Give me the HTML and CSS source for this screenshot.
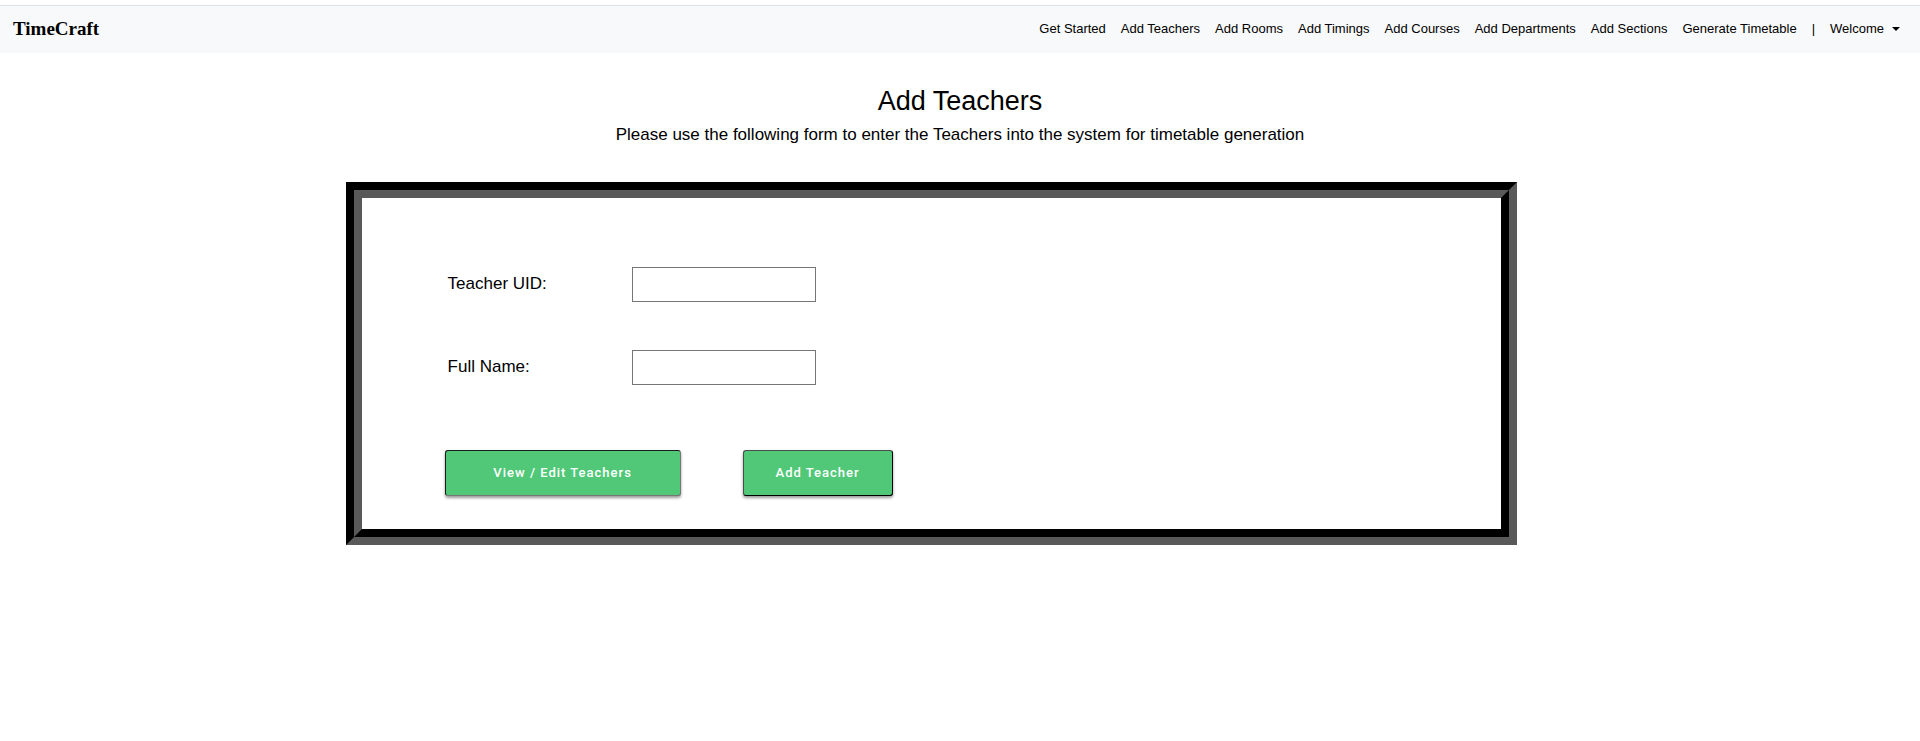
FILE: index.html
```
<!DOCTYPE html>
<html lang="en">
<head>
<meta charset="utf-8">
<title>TimeCraft - Add Teachers</title>
<link rel="stylesheet" href="styles.css">
</head>
<body>
<header class="navbar">
  <a class="brand" href="#">TimeCraft</a>
  <nav class="nav-links">
    <a href="#">Get Started</a>
    <a href="#">Add Teachers</a>
    <a href="#">Add Rooms</a>
    <a href="#">Add Timings</a>
    <a href="#">Add Courses</a>
    <a href="#">Add Departments</a>
    <a href="#">Add Sections</a>
    <a href="#">Generate Timetable</a>
    <span class="divider">|</span>
    <button class="welcome" type="button">Welcome <span class="caret"></span></button>
  </nav>
</header>
<main>
  <h1 class="title">Add Teachers</h1>
  <p class="lead">Please use the following form to enter the Teachers into the system for timetable generation</p>
  <form class="panel">
    <div class="field">
      <label for="uid">Teacher UID:</label>
      <input id="uid" name="uid" type="text">
    </div>
    <div class="field">
      <label for="name">Full Name:</label>
      <input id="name" name="name" type="text">
    </div>
    <div class="actions">
      <a class="button button-view" href="#">View / Edit Teachers</a>
      <button class="button button-add" type="submit">Add Teacher</button>
    </div>
  </form>
</main>
</body>
</html>
```
FILE: styles.css
```
* {
  box-sizing: border-box;
}

body {
  margin: 0;
  padding-top: 5px;
  background: #fff;
  color: #000;
  font-family: "Liberation Sans", Arial, sans-serif;
  font-size: 17px;
  line-height: 24px;
}

.navbar {
  display: flex;
  align-items: center;
  justify-content: space-between;
  padding: 11px 20px 12px 13px;
  border-top: 1px solid #dee2e6;
  background: #f8f9fa;
}

.brand {
  color: #000;
  font-family: Georgia, "Liberation Serif", serif;
  font-size: 19px;
  font-weight: 700;
  text-decoration: none;
}

.nav-links {
  display: flex;
  align-items: center;
  gap: 15px;
  font-size: 13px;
}

.nav-links a {
  color: #000;
  text-decoration: none;
}

.welcome {
  display: flex;
  align-items: center;
  gap: 8px;
  padding: 0;
  border: 0;
  background: none;
  color: #000;
  font: inherit;
}

.caret {
  border: 4px solid transparent;
  border-top-color: #000;
  border-bottom: 0;
}

.title {
  margin: 32px 0 6px;
  font-size: 27px;
  font-weight: 400;
  line-height: 32px;
  text-align: center;
}

.lead {
  margin: 0;
  text-align: center;
}

.panel {
  width: 61%;
  margin: 35px 0 0 18%;
  padding: 69px 83px 33px;
  border: 16px groove #050505;
}

.field {
  display: flex;
  align-items: center;
  margin: 0 0 48px 3px;
}

.field label {
  width: 184px;
  padding-bottom: 2px;
}

.field input {
  width: 184px;
  height: 35px;
  padding: 1px 2px;
  border: 1px solid #767676;
}

.actions {
  display: flex;
  gap: 62px;
  margin-top: 65px;
}

.button {
  height: 46px;
  border-radius: 3px;
  background: #50c878;
  box-shadow: 0 2px 3px rgba(0, 0, 0, 0.4);
  color: #fff;
  font-family: Roboto, sans-serif;
  font-size: 13px;
  font-weight: 500;
  letter-spacing: 1px;
  line-height: 44px;
  text-align: center;
  text-decoration: none;
}

.button-view {
  width: 236px;
  border: 1px solid;
  border-color: #1c1c1c #767676 #767676 #1c1c1c;
}

.button-add {
  width: 150px;
  padding: 0;
  border: 1px solid;
  border-color: #4c4c4c #000 #000 #4c4c4c;
}
```
